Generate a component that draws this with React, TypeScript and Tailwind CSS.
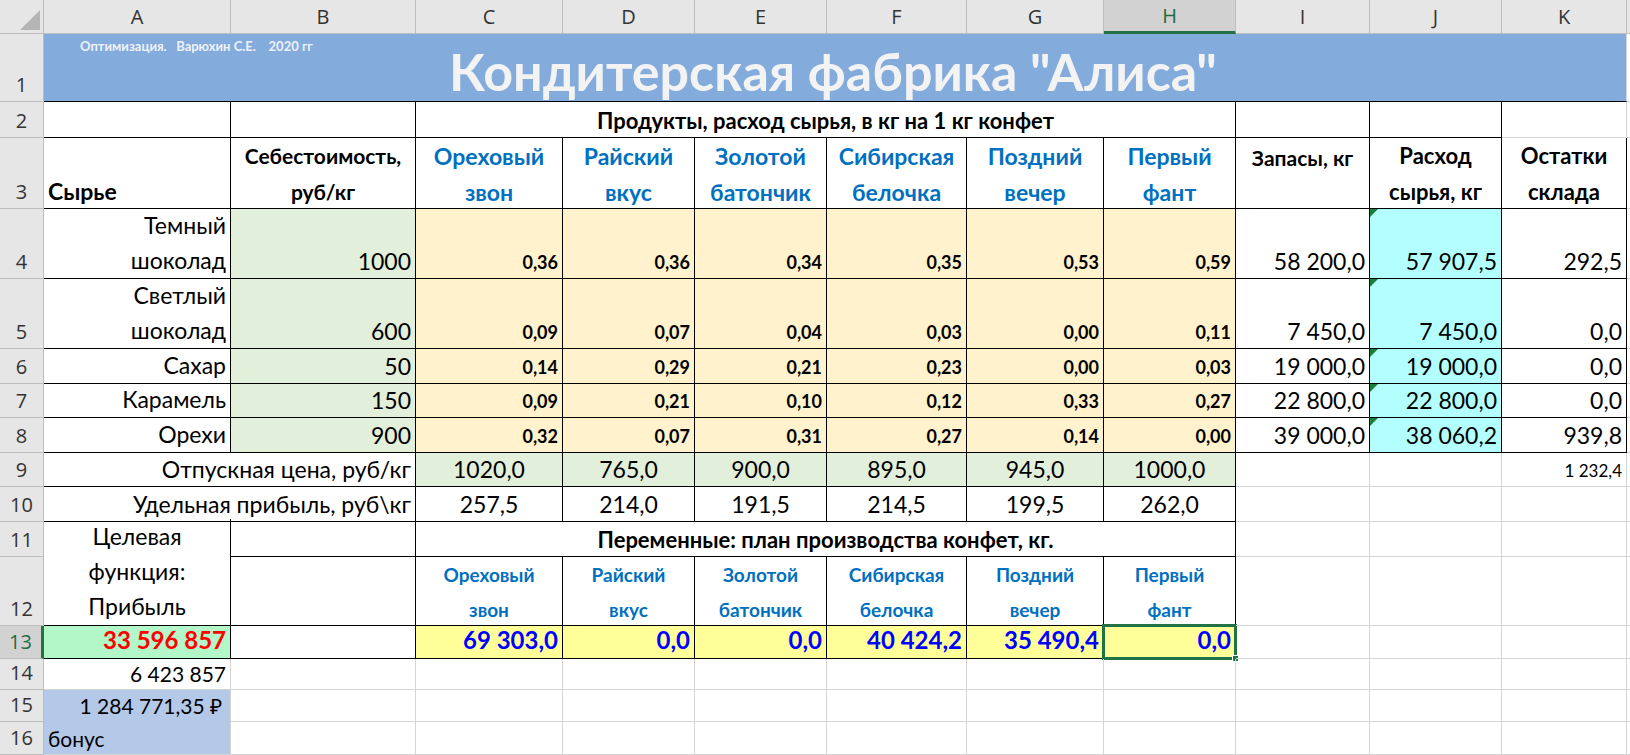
import React from "react";

const cols = [44, 187, 185, 147, 132, 132, 140, 137, 132, 134, 132, 125, 200];
const rows = [34, 68, 36, 71, 70, 70, 35, 34, 35, 34, 35, 35, 69, 33, 31, 32, 33, 40];
const letters = ["A", "B", "C", "D", "E", "F", "G", "H", "I", "J", "K", "L"];

type C = {
  r: number; c: number; rs?: number; cs?: number; t?: React.ReactNode;
  cls?: string; b?: boolean; tri?: boolean;
};

const cells: C[] = [];
const add = (x: C) => cells.push(x);

const blue = "text-[#0070c0] font-bold";
add({ r: 1, c: 1, cs: 11, cls: "bg-[#83abdc] border-b-black", t: (
  <div className="relative w-full h-full">
    <div className="absolute left-[36px] top-[3px] text-[13px] font-bold text-[#eef2f8] whitespace-pre">Оптимизация.   Варюхин С.Е.    2020 гг</div>
    <div className="absolute left-[405px] bottom-[4px] text-[52px] font-bold text-[#f3f3f3] leading-none whitespace-nowrap">Кондитерская фабрика "Алиса"</div>
  </div>) });
add({ r: 2, c: 1, b: true });
add({ r: 2, c: 2, b: true });
add({ r: 2, c: 3, cs: 6, b: true, cls: "justify-center items-end font-bold text-[22px]", t: "Продукты, расход сырья, в кг на 1 кг конфет" });
add({ r: 2, c: 9, b: true });
add({ r: 2, c: 10, b: true });
add({ r: 3, c: 1, b: true, cls: "items-end font-bold text-[23px] pl-1", t: "Сырье" });
add({ r: 3, c: 2, b: true, cls: "justify-center text-center font-bold text-[21px] leading-[36px]", t: <span>Себестоимость,<br />руб/кг</span> });
const prods = [["Ореховый", "звон"], ["Райский", "вкус"], ["Золотой", "батончик"], ["Сибирская", "белочка"], ["Поздний", "вечер"], ["Первый", "фант"]];
prods.forEach((p, i) => add({ r: 3, c: 3 + i, b: true, cls: `justify-center text-center text-[23px] leading-[36px] ${blue}`, t: <span>{p[0]}<br />{p[1]}</span> }));
add({ r: 3, c: 9, b: true, cls: "justify-center items-start font-bold text-[21px] pt-1 text-black", t: "Запасы, кг" });
add({ r: 3, c: 10, b: true, cls: "justify-center text-center font-bold text-[22px] leading-[36px] text-black", t: <span>Расход<br />сырья, кг</span> });
add({ r: 3, c: 11, b: true, cls: "justify-center text-center font-bold text-[22px] leading-[36px] text-black", t: <span>Остатки<br />склада</span> });

const mats: [React.ReactNode, string, string[], string, string, string][] = [
  [<span>Темный<br />шоколад</span>, "1000", ["0,36", "0,36", "0,34", "0,35", "0,53", "0,59"], "58 200,0", "57 907,5", "292,5"],
  [<span>Светлый<br />шоколад</span>, "600", ["0,09", "0,07", "0,04", "0,03", "0,00", "0,11"], "7 450,0", "7 450,0", "0,0"],
  ["Сахар", "50", ["0,14", "0,29", "0,21", "0,23", "0,00", "0,03"], "19 000,0", "19 000,0", "0,0"],
  ["Карамель", "150", ["0,09", "0,21", "0,10", "0,12", "0,33", "0,27"], "22 800,0", "22 800,0", "0,0"],
  ["Орехи", "900", ["0,32", "0,07", "0,31", "0,27", "0,14", "0,00"], "39 000,0", "38 060,2", "939,8"],
];
mats.forEach((m, i) => {
  const r = 4 + i;
  add({ r, c: 1, b: true, cls: "justify-end text-right text-[23px] leading-[35px] pr-1 items-end", t: m[0] });
  add({ r, c: 2, b: true, cls: "justify-end items-end text-[23px] pr-1 bg-[#e2efda]", t: m[1] });
  m[2].forEach((v, j) => add({ r, c: 3 + j, b: true, cls: "justify-end items-end text-[18px] font-bold pr-1 pb-[2px] bg-[#fff2cc]", t: v }));
  add({ r, c: 9, b: true, cls: "justify-end items-end text-[23px] pr-1", t: m[3] });
  add({ r, c: 10, b: true, tri: true, cls: "justify-end items-end text-[23px] pr-1 bg-[#b3ffff]", t: m[4] });
  add({ r, c: 11, b: true, cls: "justify-end items-end text-[23px] pr-1", t: m[5] });
});
add({ r: 9, c: 1, cs: 2, b: true, cls: "justify-end items-end text-[23px] pr-1", t: "Отпускная цена, руб/кг" });
["1020,0", "765,0", "900,0", "895,0", "945,0", "1000,0"].forEach((v, j) => add({ r: 9, c: 3 + j, b: true, cls: "justify-center items-end text-[23px] bg-[#e2efda]", t: v }));
add({ r: 9, c: 11, cls: "justify-end items-end text-[17px] pr-1 pb-[3px]", t: "1 232,4" });
add({ r: 10, c: 1, cs: 2, b: true, cls: "justify-end items-end text-[23px] pr-1", t: "Удельная прибыль, руб\\кг" });
["257,5", "214,0", "191,5", "214,5", "199,5", "262,0"].forEach((v, j) => add({ r: 10, c: 3 + j, b: true, cls: "justify-center items-end text-[23px]", t: v }));
add({ r: 11, c: 1, rs: 2, b: true, cls: "justify-center text-center text-[23px] leading-[35px] items-start -mt-[3px]", t: <span>Целевая<br />функция:<br />Прибыль</span> });
add({ r: 11, c: 2, b: true });
add({ r: 11, c: 3, cs: 6, b: true, cls: "justify-center items-end font-bold text-[22px]", t: "Переменные: план производства конфет, кг." });
add({ r: 12, c: 2, b: true });
prods.forEach((p, i) => add({ r: 12, c: 3 + i, b: true, cls: `justify-center text-center text-[19px] leading-[35px] ${blue}`, t: <span>{p[0]}<br />{p[1]}</span> }));
add({ r: 13, c: 1, b: true, cls: "justify-end items-end text-[24px] font-bold text-[#ff0000] pr-1 bg-[#b3f7c9]", t: "33 596 857" });
add({ r: 13, c: 2, b: true });
["69 303,0", "0,0", "0,0", "40 424,2", "35 490,4", "0,0"].forEach((v, j) => add({ r: 13, c: 3 + j, b: true, cls: "justify-end items-end text-[24px] font-bold text-[#0000ff] pr-1 bg-[#ffff99]", t: v }));
add({ r: 14, c: 1, cls: "justify-end items-end text-[21px] pr-1", t: "6 423 857" });
add({ r: 15, c: 1, cls: "justify-end items-end text-[21px] pr-2 bg-[#b4c8e8] border-b-[#b4c8e8]", t: "1 284 771,35 ₽" });
add({ r: 16, c: 1, cls: "items-end text-[21px] pl-1 bg-[#b4c8e8]", t: "бонус" });

const covered = new Set<string>();
cells.forEach(x => {
  for (let i = 0; i < (x.rs || 1); i++) for (let j = 0; j < (x.cs || 1); j++) covered.add(`${x.r + i}-${x.c + j}`);
});
for (let r = 1; r <= 17; r++) for (let c = 1; c <= 12; c++) if (!covered.has(`${r}-${c}`)) add({ r, c });

export default function App() {
  return (
    <div className="w-[1630px] h-[755px] overflow-hidden bg-white" style={{ fontFamily: "Lato, 'Open Sans', sans-serif" }}>
      <div className="grid" style={{ gridTemplateColumns: cols.map(c => c + "px").join(" "), gridTemplateRows: rows.map(r => r + "px").join(" ") }}>
        <div className="bg-[#e6e6e6] border-r border-b border-[#bdbdbd] relative" style={{ gridRow: 1, gridColumn: 1 }}>
          <div className="absolute right-[3px] bottom-[3px] w-0 h-0 border-l-[20px] border-l-transparent border-b-[20px] border-b-[#b5b5b5]" />
        </div>
        {letters.map((l, i) => (
          <div key={l} className={`flex items-center justify-center text-[20px] border-r border-b ${l === "H" ? "bg-[#d2d2d2] text-[#1e6b41] border-b-[3px] border-b-[#217346] border-r-[#bdbdbd]" : "bg-[#e6e6e6] text-[#333] border-[#bdbdbd]"}`} style={{ gridRow: 1, gridColumn: i + 2, fontFamily: "'Open Sans', sans-serif" }}>{l}</div>
        ))}
        {Array.from({ length: 17 }, (_, i) => i + 1).map(n => (
          <div key={n} className={`flex items-end justify-center pb-[1px] text-[20px] border-r border-b border-[#bdbdbd] ${n === 13 ? "bg-[#d2d2d2] text-[#1e6b41] border-r-[3px] border-r-[#217346]" : "bg-[#e6e6e6] text-[#333]"}`} style={{ gridRow: n + 1, gridColumn: 1, fontFamily: "'Open Sans', sans-serif" }}>{n}</div>
        ))}
        {cells.map((x, i) => {
          const hasColor = (x.cls || "").includes("text-[#");
          return (
            <div key={i}
              className={`relative flex overflow-visible whitespace-nowrap border-r border-b ${hasColor ? "" : "text-black"} ${x.b ? "border-black" : "border-[#d4d4d4]"} ${x.cls || ""}`}
              style={{ gridRow: `${x.r + 1} / span ${x.rs || 1}`, gridColumn: `${x.c + 1} / span ${x.cs || 1}` }}>
              {x.tri && <div className="absolute left-0 top-0 w-0 h-0 border-t-[8px] border-t-[#1a7f3a] border-r-[8px] border-r-transparent" />}
              {x.t}
              {x.r === 13 && x.c === 8 && <div className="absolute -inset-[2px] border-[3px] border-[#217346] pointer-events-none"><div className="absolute -right-[5px] -bottom-[5px] w-[7px] h-[7px] bg-[#217346] border border-white" /></div>}
            </div>
          );
        })}
      </div>
    </div>
  );
}
